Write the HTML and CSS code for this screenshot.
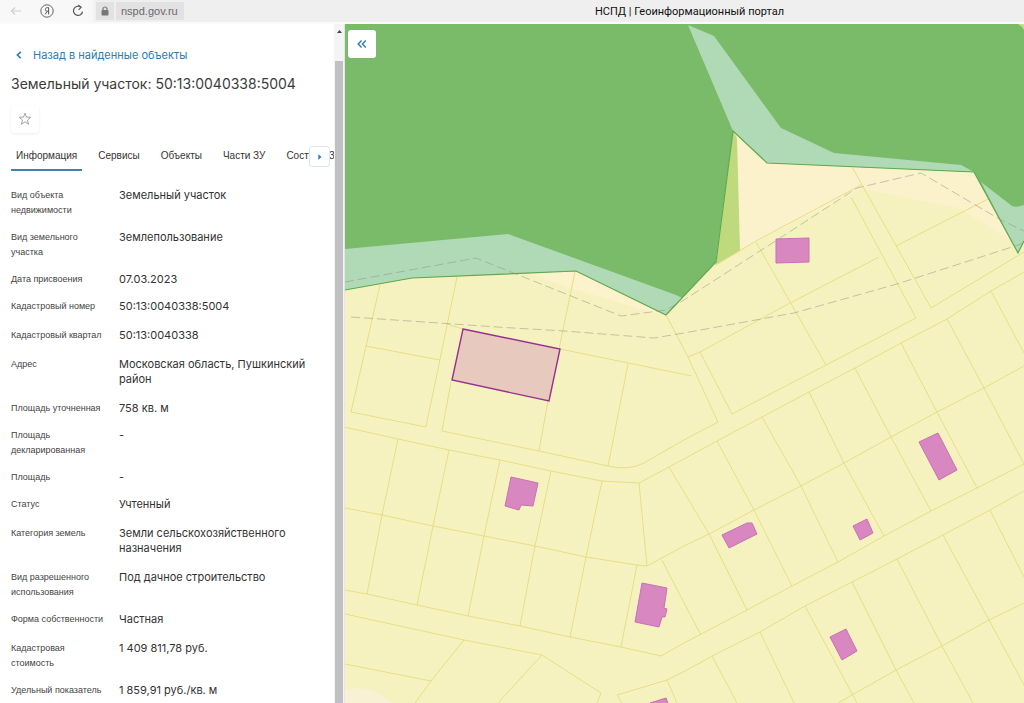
FILE: index.html
```html
<!DOCTYPE html>
<html lang="ru">
<head>
    <meta charset="UTF-8">
    <meta name="viewport" content="width=device-width, initial-scale=1.0">
    <title>НСПД | Геоинформационный портал</title>
    <link rel="stylesheet" href="styles.css">
</head>
<body>

    <header class="browser-bar">
        <div class="browser-nav">
            <button class="nav-btn" aria-label="Назад" disabled>
                <svg width="12" height="12" viewBox="0 0 12 12"><path d="M11 6H1.5M5 2.5L1.5 6L5 9.5" fill="none" stroke="#cfcfcf" stroke-width="1.2"/></svg>
            </button>
            <button class="nav-btn" aria-label="Яндекс">
                <svg width="14" height="14" viewBox="0 0 14 14"><circle cx="7" cy="7" r="6.2" fill="none" stroke="#666" stroke-width="1"/><path d="M8.6 10.4V3.6H7.4C6 3.6 5.4 4.4 5.4 5.4C5.4 6.6 6 7.2 7.2 7.2H8.6M7.1 7.4L5.2 10.4" fill="none" stroke="#555" stroke-width="1"/></svg>
            </button>
            <button class="nav-btn" aria-label="Обновить">
                <svg width="12" height="14" viewBox="0 0 12 14"><path d="M8.4 2.9A4.6 4.6 0 1 0 10.6 7.6" fill="none" stroke="#555" stroke-width="1.2"/><path d="M6.2 0.8L9.2 3.3L6.6 5.8" fill="none" stroke="#555" stroke-width="1.1"/></svg>
            </button>
            <div class="address">
                <span class="lock">
                    <svg width="8" height="10" viewBox="0 0 8 10"><path d="M2 5V3A2 2 0 0 1 6 3V5" fill="none" stroke="#777" stroke-width="1.2"/><rect x="0.5" y="4" width="7" height="5.5" rx="1" fill="#777"/></svg>
                </span>
                <span class="host">nspd.gov.ru</span>
            </div>
        </div>
        <div class="page-title">НСПД | Геоинформационный портал</div>
    </header>

    <div class="layout">
        <aside class="panel">
            <div class="panel-content">
                <a class="back-link" href="#">
                    <svg width="6" height="8" viewBox="0 0 6 8"><path d="M4.8 0.8L1.4 4L4.8 7.2" fill="none" stroke="#2c7cb5" stroke-width="1.6"/></svg>
                    Назад в найденные объекты
                </a>
                <h1>Земельный участок: 50:13:0040338:5004</h1>
                <button class="fav-btn" aria-label="В избранное">
                    <svg width="14" height="14" viewBox="0 0 14 14"><path d="M7 1.2L8.5 5.1L12.8 5.3L9.5 8L10.6 12.2L7 9.8L3.4 12.2L4.5 8L1.2 5.3L5.5 5.1Z" fill="none" stroke="#999" stroke-width="0.9" stroke-linejoin="round"/></svg>
                </button>

                <nav class="tabs">
                    <a class="tab active" href="#">Информация</a>
                    <a class="tab" href="#">Сервисы</a>
                    <a class="tab" href="#">Объекты</a>
                    <a class="tab" href="#">Части ЗУ</a>
                    <a class="tab" href="#">Состав ЕЗП</a>
                    <button class="tabs-next" aria-label="Далее">
                        <svg width="4" height="6" viewBox="0 0 4 6"><path d="M0.3 0.3L3.6 3L0.3 5.7Z" fill="#2c7cb5"/></svg>
                    </button>
                </nav>

                <dl class="info">
                    <div class="row"><dt>Вид объекта недвижимости</dt><dd>Земельный участок</dd></div>
                    <div class="row"><dt>Вид земельного участка</dt><dd>Землепользование</dd></div>
                    <div class="row"><dt>Дата присвоения</dt><dd>07.03.2023</dd></div>
                    <div class="row loose"><dt>Кадастровый номер</dt><dd>50:13:0040338:5004</dd></div>
                    <div class="row loose"><dt>Кадастровый квартал</dt><dd>50:13:0040338</dd></div>
                    <div class="row loose"><dt>Адрес</dt><dd>Московская область, Пушкинский район</dd></div>
                    <div class="row"><dt>Площадь уточненная</dt><dd>758 кв. м</dd></div>
                    <div class="row"><dt>Площадь декларированная</dt><dd>-</dd></div>
                    <div class="row"><dt>Площадь</dt><dd>-</dd></div>
                    <div class="row loose"><dt>Статус</dt><dd>Учтенный</dd></div>
                    <div class="row loose"><dt>Категория земель</dt><dd>Земли сельскохозяйственного назначения</dd></div>
                    <div class="row"><dt>Вид разрешенного использования</dt><dd>Под дачное строительство</dd></div>
                    <div class="row loose"><dt>Форма собственности</dt><dd>Частная</dd></div>
                    <div class="row"><dt>Кадастровая стоимость</dt><dd>1 409 811,78 руб.</dd></div>
                    <div class="row"><dt>Удельный показатель</dt><dd>1 859,91 руб./кв. м</dd></div>
                </dl>
            </div>
            <div class="scrollbar">
                <svg class="scroll-up" width="5" height="3" viewBox="0 0 5 3"><path d="M0 3L2.5 0L5 3Z" fill="#444"/></svg>
                <div class="scroll-thumb"></div>
            </div>
        </aside>

        <main class="map">
            <svg class="map-canvas" viewBox="345 24 679 679" preserveAspectRatio="xMinYMin slice">
                <rect x="345" y="24" width="679" height="679" fill="#f6f2bf"/>
                <path d="M733 131L767 163L974 172L1012 242L960 208L861 189L740 250Z" fill="#fbf2cb"/>
                <path d="M576 271L666 315L650 312L570 288L530 274Z" fill="#fcf2cb"/>
                <path d="M345 690Q370 683 392 703H345Z" fill="#f9f1d3"/>

                <!-- forest -->
                <path d="M345 24H1024V241L1018 253L974 172L767 163L733 131L716 262L666 315L576 271L412 278L345 290Z" fill="#7abb6a"/>
                <path d="M733 131L737 138L740 251L715 265Z" fill="#bfd97d"/>
                <g fill="#b0dab5">
                    <path d="M345 249L508 234L676 295L682 298L666 315L576 271L412 278L345 290Z"/>
                    <path d="M688 25L714 36L781 128L834 153L961 165L974 172L767 163L733 131Z"/>
                    <path d="M981 182L1012 206Q1017 208 1024 205V241L1018 253Z"/>
                </g>
                <path d="M1018 24Q1022 26 1024 30V24Z" fill="#c4df91"/>
                <path d="M345 290L412 278L576 271L666 315L716 262L733 131L767 163L974 172L1018 253L1024 241" fill="none" stroke="#5fa951" stroke-width="1.2"/>

                <!-- parcel borders -->
                <g class="parcels">
                    <path d="M380 285L351 412L426 427L457 277M366 346L440 360M575 272L559 349"/>
                    <path d="M447 324L463 329M451 382L442 431L539 451L608 466Q628 471 644 463L684 440L718 422L688 357L666 315M548 401L539 451M560 349L692 376M628 364L608 466"/>
                    <path d="M344 427L398 439L449 450L500 460L551 471L602 481L639 483L669 467L717 441L762 417L809 392L855 368L901 343L947 319L991 291L1024 272"/>
                    <path d="M688 357L700 352L732 414L826 365L916 318L851 197M700 352L790 303L879 257M756 242L826 365M716 265L756 241L861 185M852 167L931 308L1024 252M896 246L988 199"/>
                    <path d="M639 483L647 566L684 546L709 534L754 510L801 486L844 463L891 437L937 412L984 388L1024 366"/>
                    <path d="M669 467L709 534L747 610M717 441L754 510L792 586M762 417L801 486L838 562M809 392L844 463L884 536M855 368L891 437L931 511M901 343L937 412L977 488M947 319L984 388L1024 464M991 291L1024 353M662 560L684 603L701 635"/>
                    <path d="M345 590L367 594L417 605L468 616L520 626L570 637L621 647L661 656L684 643L747 610L792 586L838 562L884 536L931 511L977 488L1024 464"/>
                    <path d="M345 508L382 515L433 526L484 536L535 546L586 557L637 565L647 566M398 439L382 515L367 594M449 450L433 526L417 605M500 460L484 536L468 616M551 471L535 546L520 626M602 481L586 557L570 637M637 565L621 647"/>
                    <path d="M345 614L464 640L542 655L601 693L597 703M464 640L431 681L415 703M542 655L498 703M345 664L431 681"/>
                    <path d="M622 703L617 695L667 680L687 670L712 656L760 632L805 606L852 582L897 559L943 535L990 510L1024 491"/>
                    <path d="M667 680L677 703M712 656L737 703M760 632L794 703M805 606L857 703M852 582L896 670L914 703M897 559L942 646L973 703M943 535L989 620L1024 685M990 510L1024 577M838 703L852 695L896 670L942 646L989 620L1024 603"/>
                </g>

                <!-- zone borders -->
                <g class="zones">
                    <path d="M345 282L476 258L621 316L666 310L684 300L777 240L857 188L921 173L1001 220L1024 231"/>
                    <path d="M351 317L497 327L564 331L654 338L684 333L794 313L897 284L1012 247L1024 243"/>
                </g>

                <g class="buildings">
                    <path d="M776 239L809 238L809 262L776 263Z"/>
                    <path d="M919 442L938 433L957 470L939 480Z"/>
                    <path d="M722 535L747 523L752 523L757 534L729 548Z"/>
                    <path d="M853 526L867 519L873 533L860 540Z"/>
                    <path d="M830 637L846 629L857 651L842 660Z"/>
                    <path d="M511 477L538 483L533 506L521 505L519 510L505 506Z"/>
                    <path d="M642 583L667 588L664 608L667 609L665 617L662 617L659 627L635 622Z"/>
                    <path d="M650 703L666 698L669 706Z"/>
                </g>
                <path d="M463 329L560 349L549 401L452 380Z" fill="#e7c9bd" stroke="#97308f" stroke-width="1.4"/>
            </svg>
            <button class="collapse-btn" aria-label="Свернуть панель">
                <svg width="10" height="8" viewBox="0 0 10 8"><path d="M4.6 0.6L1.2 4L4.6 7.4M8.8 0.6L5.4 4L8.8 7.4" fill="none" stroke="#2c7cb5" stroke-width="1.4"/></svg>
            </button>
        </main>
    </div>

</body>
</html>
```

FILE: styles.css
```css
* {
    box-sizing: border-box;
}

body {
    font-family: Inter, "Liberation Sans", sans-serif;
    margin: 0;
    height: 100vh;
    display: flex;
    flex-direction: column;
    overflow: hidden;
    color: #3c3c3c;
    background-color: #fff;
}

button {
    padding: 0;
    border: none;
    background: none;
    cursor: pointer;
    display: flex;
    align-items: center;
    justify-content: center;
}

h1, dl, dd {
    margin: 0;
}

.browser-bar {
    display: flex;
    flex: none;
    height: 24px;
    border-bottom: 2px solid #fafafa;
    background-color: #efefef;
}

.browser-nav {
    display: flex;
    align-items: center;
    width: 345px;
    background: linear-gradient(to right, #f8f8f8 92px, #efefef 96px);
}

.nav-btn {
    width: 31px;
    height: 22px;
}

.address {
    display: flex;
    align-items: center;
    margin-left: 3px;
    font-family: "Liberation Sans", Arial, sans-serif;
    font-size: 11px;
    color: #6a6a6a;
}

.lock, .host {
    display: flex;
    align-items: center;
    height: 18px;
    background-color: #e2e2e2;
}

.lock {
    padding: 0 5px;
    margin-right: 2px;
}

.host {
    padding: 0 6px 0 5px;
}

.page-title {
    flex: 1;
    padding-left: 10px;
    font-family: Roboto, sans-serif;
    font-size: 11px;
    line-height: 24px;
    text-align: center;
    color: #111;
}

.layout {
    display: flex;
    flex: 1;
    min-height: 0;
}

.panel {
    display: flex;
    flex: none;
    width: 345px;
    border-right: 1px solid #e6e6e6;
}

.panel-content {
    flex: 1;
    min-width: 0;
    padding: 23px 0 0 11px;
    overflow: hidden;
}

.back-link {
    display: flex;
    align-items: center;
    gap: 11px;
    padding-left: 5px;
    font-size: 11px;
    line-height: 16px;
    color: #2c7cb5;
    text-decoration: none;
}

h1 {
    margin-top: 11px;
    font-size: 14px;
    line-height: 20px;
    font-weight: 400;
}

.fav-btn {
    width: 28px;
    height: 28px;
    margin-top: 11px;
    border-radius: 3px;
    box-shadow: 0 1px 3px rgba(0, 0, 0, 0.08);
}

.tabs {
    position: relative;
    display: flex;
    gap: 11px;
    margin-top: 10px;
    white-space: nowrap;
    overflow: hidden;
}

.tab {
    padding: 0 5px;
    border-bottom: 2px solid transparent;
    font-family: "Liberation Sans", Arial, sans-serif;
    font-size: 10px;
    line-height: 26px;
    color: #333;
    text-decoration: none;
}

.tab.active {
    border-bottom-color: #3c82b4;
}

.tabs-next {
    position: absolute;
    right: 4px;
    top: 3px;
    width: 21px;
    height: 21px;
    border: 1px solid #dce6ee;
    border-radius: 3px;
    background-color: #fff;
}

.info {
    padding-top: 17px;
}

.row {
    display: grid;
    grid-template-columns: 96px 1fr;
    column-gap: 12px;
    padding-bottom: 12px;
    padding-right: 20px;
    line-height: 15px;
}

.loose {
    padding-bottom: 14px;
}

.row dt {
    font-family: "Liberation Sans", Arial, sans-serif;
    font-size: 9px;
    color: #444;
}

.row dd {
    font-size: 11px;
    color: #333;
}

.scrollbar {
    display: flex;
    flex-direction: column;
    align-items: center;
    flex: none;
    width: 10px;
    background-color: #f4f4f4;
}

.scroll-up {
    flex: none;
    margin: 6px 0 28px;
}

.scroll-thumb {
    flex: 1;
    width: 8px;
    background-color: #c0bfc1;
}

.map {
    position: relative;
    flex: 1;
    min-width: 0;
    background-color: #f6f2bf;
}

.map-canvas {
    display: block;
    width: 100%;
    height: 100%;
}

.parcels {
    fill: none;
    stroke: #e8de82;
    stroke-width: 1;
}

.zones {
    fill: none;
    stroke: #8f8f83;
    stroke-opacity: 0.5;
    stroke-width: 1;
    stroke-dasharray: 9 4;
}

.buildings {
    fill: #d987c1;
    stroke: #c970b5;
    stroke-width: 1;
}

.collapse-btn {
    position: absolute;
    left: 3px;
    top: 6px;
    width: 28px;
    height: 28px;
    border-radius: 3px;
    background-color: #fff;
}
```
